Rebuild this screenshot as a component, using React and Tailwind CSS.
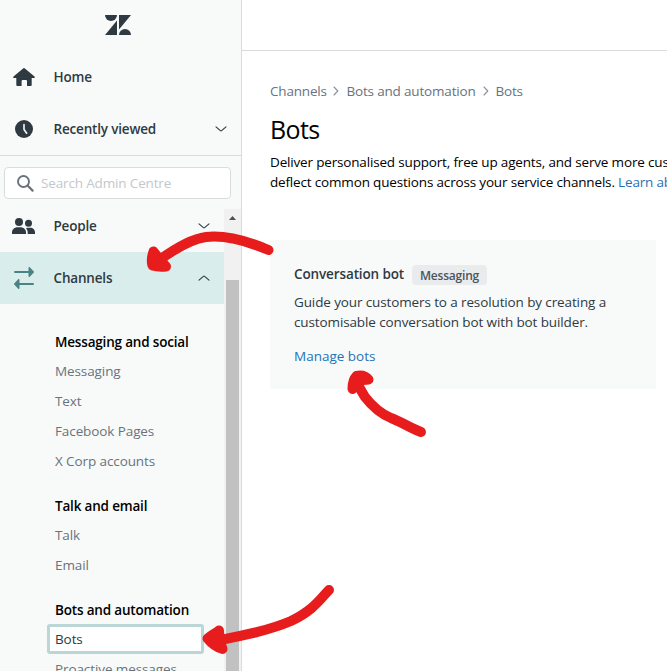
import React from "react";

const Chevron = ({ up = false }) => (
  <svg width="12" height="12" viewBox="0 0 12 12" fill="none" stroke="#2f3941" strokeWidth="1.1" strokeLinecap="round" strokeLinejoin="round">
    {up ? <path d="M1 8.2 5.4 4.3a.9.9 0 0 1 1.2 0L11 8.2" /> : <path d="M1 3.8 5.4 7.7a.9.9 0 0 0 1.2 0L11 3.8" />}
  </svg>
);

const Logo = () => (
  <svg width="26" height="20" viewBox="0 0 26 20" fill="#2f3941">
    <path d="M0 0h12a6 6 0 0 1-12 0Z" />
    <path d="M12 5.4V20H0Z" />
    <path d="M14 0h12L14 14.6Z" />
    <path d="M14 20a6 6 0 0 1 12 0Z" />
  </svg>
);

const HomeIcon = () => (
  <svg width="22" height="18" viewBox="0 0 22 18" fill="#2f3941">
    <path d="M10.1.4a1.4 1.4 0 0 1 1.8 0l9.6 8c.8.7.4 1.700-.5 1.700h-2.300V17a1 1 0 0 1-1 1H14v-5a1 1 0 0 0-1-1H9.600a1 1 0 0 0-1 1v5H4.300a1 1 0 0 1-1-1v-6.900H1C.1 10.100-.3 9.100.5 8.400Z" />
  </svg>
);

const ClockIcon = () => (
  <svg width="18" height="18" viewBox="0 0 18 18">
    <circle cx="9" cy="9" r="9" fill="#2f3941" />
    <path d="M9 4.500v5l2.700 3.700" fill="none" stroke="#f8f9f9" strokeWidth="1.600" strokeLinecap="round" strokeLinejoin="round" />
  </svg>
);

const PeopleIcon = () => (
  <svg width="23" height="16" viewBox="0 0 23 16" fill="#2f3941">
    <circle cx="7" cy="4" r="4" />
    <path d="M0 16v-1.500C0 11.500 2.500 9.300 5.500 9.300h3c3 0 5.500 2.200 5.500 5.200V16Z" />
    <circle cx="16.500" cy="5.300" r="3.500" />
    <path d="M14 10.200c.8-.3 1.500-.4 2.500-.4h1.700c2.700 0 4.800 1.900 4.800 4.700V16h-7.300v-1.500c0-1.700-.6-3.200-1.700-4.300Z" />
  </svg>
);

const ChannelsIcon = () => (
  <svg width="20" height="22" viewBox="0 0 20 22" fill="#4a8384">
    <path d="M1 4h13.500V.8c0-.8.8-1 1.300-.5l4 4.100c.3.400.3.800 0 1.200l-4 4.100c-.5.500-1.300.3-1.300-.5V6H1a1 1 0 0 1 0-2Z" />
    <path d="M19 16H5.500v-3.200c0-.8-.8-1-1.300-.5l-4 4.100c-.3.400-.3.800 0 1.200l4 4.100c.5.500 1.300.3 1.300-.5V18H19a1 1 0 0 0 0-2Z" />
  </svg>
);

const SearchIcon = () => (
  <svg width="17" height="17" viewBox="0 0 17 17" fill="none" stroke="#68737d" strokeLinecap="round">
    <circle cx="6.500" cy="6.500" r="5.500" strokeWidth="1.900" />
    <path d="m10.800 10.800 4.800 4.800" strokeWidth="2.200" />
  </svg>
);

const Crumb = () => (
  <svg width="6" height="10" viewBox="0 0 6 10" fill="none" stroke="#87929d" strokeWidth="1.100" strokeLinecap="round" strokeLinejoin="round">
    <path d="m1 1 3.800 4L1 9" />
  </svg>
);

const NavRow = ({ icon, label, chevron }) => (
  <div className="flex h-[52px] shrink-0 items-center">
    <div className="flex w-[47px] shrink-0 justify-center">{icon}</div>
    <span className="ml-[6.5px] flex-1 font-[570] tracking-[-0.18px]">{label}</span>
    {chevron}
  </div>
);

const groups = [
  { title: "Messaging and social", items: ["Messaging", "Text", "Facebook Pages", "X Corp accounts"] },
  { title: "Talk and email", items: ["Talk", "Email"] },
  { title: "Bots and automation", items: ["Bots", "Proactive messages"] },
];

const Sidebar = () => (
  <aside className="flex w-[242px] shrink-0 flex-col border-r border-[#d8dcde] bg-[#f8faf9]">
    <div className="flex h-[51px] shrink-0 justify-center pr-[5px] pt-[15px]"><Logo /></div>
    <NavRow icon={<HomeIcon />} label="Home" />
    <div className="flex h-[53px] shrink-0 flex-col border-b border-[#d8dcde] pr-[14px]">
      <NavRow icon={<ClockIcon />} label="Recently viewed" chevron={<Chevron />} />
    </div>
    <div className="flex h-[53px] shrink-0 items-start pl-1 pr-[10px] pt-[11px]">
      <div className="flex h-8 w-full items-center gap-[7px] rounded border border-[#d8dcde] bg-white pl-3">
        <SearchIcon />
        <span className="tracking-[-0.15px] text-[#c2c8cc]">Search Admin Centre</span>
      </div>
    </div>
    <div className="flex min-h-0 flex-1">
      <nav className="-mt-[9px] flex w-[224px] flex-col">
        <div className="pr-[14px]"><NavRow icon={<PeopleIcon />} label="People" chevron={<Chevron />} /></div>
        <div className="bg-[#daeded] pr-[14px]"><NavRow icon={<ChannelsIcon />} label="Channels" chevron={<Chevron up />} /></div>
        <div className="flex flex-col gap-4 pl-[47px] pr-5 pt-6">
          {groups.map((g) => (
            <div key={g.title}>
              <h3 className="h-7 pl-2 font-semibold leading-7 tracking-[-0.18px] text-black">{g.title}</h3>
              {g.items.map((t) => (
                <div
                  key={t}
                  className={
                    t === "Bots"
                      ? "flex h-[30px] items-center rounded-[3px] border-3 border-[#bad6d6] bg-white pl-[5px] tracking-[-0.1px] text-[#2f3941]"
                      : "flex h-[30px] items-center pl-2 tracking-[-0.1px] text-[#68737d]"
                  }
                >
                  {t}
                </div>
              ))}
            </div>
          ))}
        </div>
      </nav>
      <div className="flex w-[17px] flex-col items-center bg-[#f1f1f1]">
        <svg width="17" height="17" viewBox="0 0 17 17" className="shrink-0"><path d="M5 11h7L8.500 7Z" fill="#505050" /></svg>
        <div className="mt-[54px] w-[13px] flex-1 bg-[#c1c1c1]" />
      </div>
    </div>
  </aside>
);

const Arrows = () => (
  <svg className="pointer-events-none absolute left-0 top-0" width="667" height="671" viewBox="0 0 667 671" fill="none" stroke="#e71d1d" strokeWidth="10" strokeLinecap="round" strokeLinejoin="round">
    <path d="M268.500 250C245 240 224 235 206 237 190 239 173 250 158 261" />
    <path d="M153.500 251.500c-2 6-2 11-1 14 3 1 8 1.500 13.500 1l-7-8Z" fill="#e71d1d" />
    <path d="M421 432c-11-4-19-10-30-14-12-5-19-12-26-21-3-5-6-10-9-16" />
    <path d="M352.500 389c0-6 1-10 4-13 5-1 9 0 12 3.500l-10 1Z" fill="#e71d1d" />
    <path d="M329 590c-8 8-15 20-38 31-21 9-45 14-76 20" />
    <path d="M219 630.500c-4 3-8 5-11.500 8 4 5 9 9 15 10.500l-3-9Z" fill="#e71d1d" />
  </svg>
);

export default function App() {
  return (
    <div className="relative flex h-[671px] w-[667px] overflow-hidden whitespace-nowrap bg-white font-['Open_Sans','Noto_Sans',sans-serif] text-[13.5px] leading-5 text-[#2f3941]">
      <Sidebar />
      <main className="flex min-w-0 flex-1 flex-col overflow-hidden">
        <header className="h-[51px] shrink-0 border-b border-[#d8dcde]" />
        <div className="flex flex-col pl-7 pt-[30px]">
          <div className="flex items-center tracking-[-0.18px] text-[#68737d]">
            <span className="w-[63px]">Channels</span>
            <Crumb />
            <span className="ml-[7.5px] w-[136.5px]">Bots and automation</span>
            <Crumb />
            <span className="ml-[6.5px]">Bots</span>
          </div>
          <h1 className="mt-[12px] mb-[2px] h-8 text-[25px] leading-8 tracking-[-0.6px] text-black">Bots</h1>
          <div className="mt-[5px] tracking-[-0.17px] text-black">
            <p>Deliver personalised support, free up agents, and serve more customers.</p>
            <p>deflect common questions across your service channels. <span className="text-[#1f73b7]">Learn about bots</span></p>
          </div>
          <section className="mt-12 h-[149px] w-[386px] bg-[#f8faf9] pl-6 pt-6 tracking-[-0.12px]">
            <div className="flex h-[22px] items-start">
              <span className="w-[118px] font-[570]">Conversation bot</span>
              <span className="mt-px flex h-5 w-[75px] items-center justify-center rounded-sm bg-[#e9ebed] pt-px text-[12px] font-[570] tracking-[-0.2px] text-[#49545c]">Messaging</span>
            </div>
            <p className="mt-[6px]">Guide your customers to a resolution by creating a</p>
            <p>customisable conversation bot with bot builder.</p>
            <p className="mt-[14px] tracking-normal text-[#1f73b7]">Manage bots</p>
          </section>
        </div>
      </main>
      <Arrows />
    </div>
  );
}
